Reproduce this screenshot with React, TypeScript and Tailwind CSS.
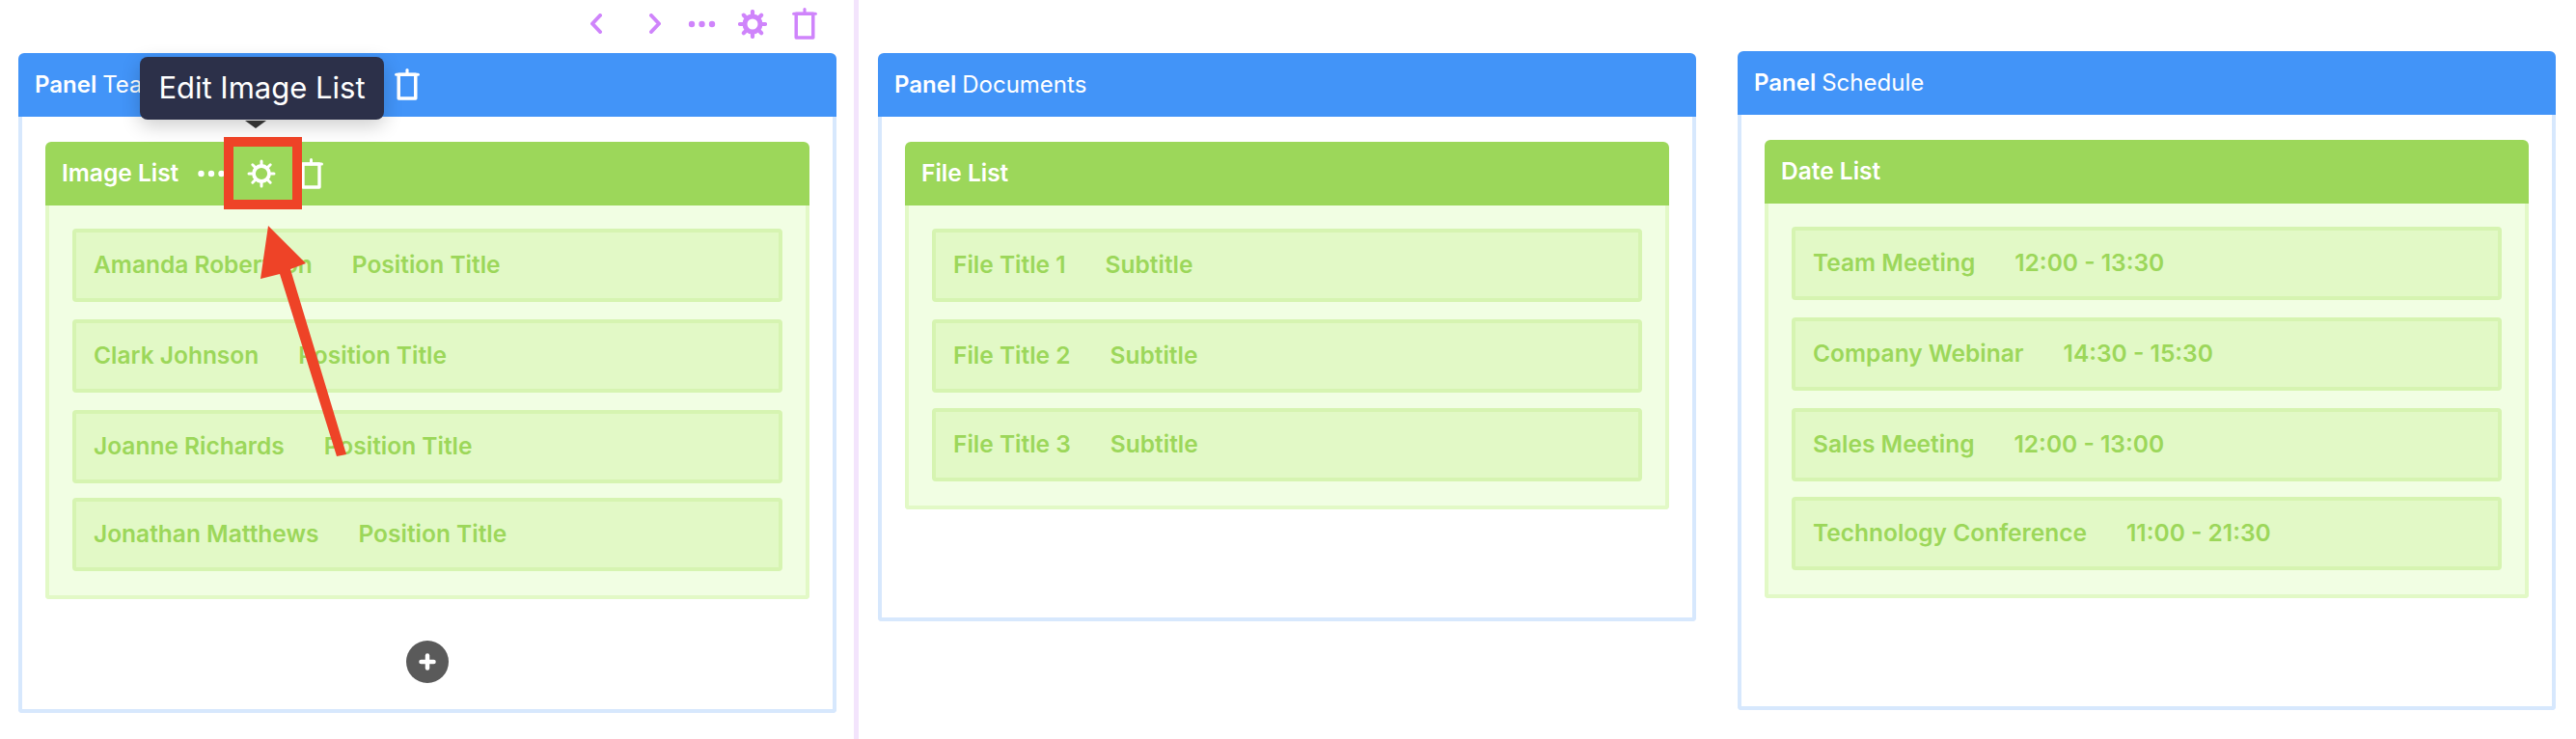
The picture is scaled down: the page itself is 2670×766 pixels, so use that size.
import React from "react";

const Gear = ({ className = "", stroke = 3 }: { className?: string; stroke?: number }) => (
  <svg className={className} viewBox="0 0 30 30" fill="none" stroke="currentColor" strokeLinecap="round">
    <circle cx="15" cy="15" r="8" strokeWidth={stroke + 0.8} />
    {[0, 45, 90, 135, 180, 225, 270, 315].map((a) => (
      <line key={a} x1="15" y1="5.5" x2="15" y2="2" strokeWidth={stroke} transform={`rotate(${a} 15 15)`} />
    ))}
  </svg>
);

const Trash = ({ className = "" }: { className?: string }) => (
  <svg className={className} viewBox="0 0 25 32" fill="none" stroke="currentColor" strokeLinecap="round">
    <line x1="1.5" y1="6" x2="23.5" y2="6" strokeWidth="3" />
    <line x1="12.5" y1="1.5" x2="12.5" y2="6" strokeWidth="3" />
    <rect x="4" y="6" width="17" height="24" strokeWidth="3.4" strokeLinejoin="round" />
  </svg>
);

const Dots = ({ className = "" }: { className?: string }) => (
  <svg className={className} viewBox="0 0 28 8" fill="currentColor">
    <circle cx="3.5" cy="4" r="3.2" />
    <circle cx="14" cy="4" r="3.2" />
    <circle cx="24.5" cy="4" r="3.2" />
  </svg>
);

const Chevron = ({ flip = false }: { flip?: boolean }) => (
  <svg className="w-[12px] h-[21px]" viewBox="0 0 12 21" fill="none" stroke="currentColor" strokeWidth="4" strokeLinecap="round" strokeLinejoin="round">
    <polyline points={flip ? "2,2 10,10.5 2,19" : "10,2 2,10.5 10,19"} />
  </svg>
);

type Row = { left: string; right: string; mt: string };

const teamRows: Row[] = [
  { left: "Amanda Robertson", right: "Position Title", mt: "" },
  { left: "Clark Johnson", right: "Position Title", mt: "mt-[18px]" },
  { left: "Joanne Richards", right: "Position Title", mt: "mt-[18px]" },
  { left: "Jonathan Matthews", right: "Position Title", mt: "mt-[15px]" },
];

const fileRows: Row[] = [
  { left: "File Title 1", right: "Subtitle", mt: "" },
  { left: "File Title 2", right: "Subtitle", mt: "mt-[18px]" },
  { left: "File Title 3", right: "Subtitle", mt: "mt-[16px]" },
];

const dateRows: Row[] = [
  { left: "Team Meeting", right: "12:00 - 13:30", mt: "" },
  { left: "Company Webinar", right: "14:30 - 15:30", mt: "mt-[18px]" },
  { left: "Sales Meeting", right: "12:00 - 13:00", mt: "mt-[18px]" },
  { left: "Technology Conference", right: "11:00 - 21:30", mt: "mt-[16px]" },
];

const ListBlock = ({ title, rows, tools }: { title: string; rows: Row[]; tools?: React.ReactNode }) => (
  <div className="mt-[26px]">
    <div className="h-[66px] pb-[1px] bg-[#9cd75a] rounded-t-[6px] flex items-center pl-[17px] text-white text-[24.5px] font-semibold">
      {title}
      {tools}
    </div>
    <div className="bg-[#f1fee3] border-x-[4px] border-b-[4px] border-[#e2f9c6] rounded-b-[4px] pt-[24px] pb-[25px] px-[24px]">
      {rows.map((row) => (
        <div
          key={row.left}
          className={`h-[76px] pb-[2px] bg-[#e2f9c6] border-[4px] border-[#d6f4b1] rounded-[4px] flex items-center gap-[41px] pl-[18px] text-[24.5px] font-semibold text-[#9cd75a] ${row.mt}`}
        >
          <span>{row.left}</span>
          <span>{row.right}</span>
        </div>
      ))}
    </div>
  </div>
);

const Panel = ({ name, height, tools, children }: { name: string; height: string; tools?: React.ReactNode; children: React.ReactNode }) => (
  <div className={height + " flex flex-col"}>
    <div className="h-[66px] shrink-0 bg-[#4294f8] rounded-t-[6px] flex items-center pl-[17px] text-white text-[24px]">
      <span className="font-semibold mr-[6px]">Panel</span>
      <span>{name}</span>
      {tools}
    </div>
    <div className="flex-1 bg-white border-x-[4px] border-b-[4px] border-[#d7e8fd] rounded-b-[4px] px-[24px]">{children}</div>
  </div>
);

export default function App() {
  return (
    <div className="relative w-[2670px] h-[766px] overflow-hidden bg-white flex font-[family-name:Inter,sans-serif]">
      {/* Column 1 */}
      <div className="w-[890px] shrink-0 border-r-[5px] border-[#f3e4fc] pl-[19px] pr-[18px]">
        <div className="h-[55px] flex items-center text-[#cf84fb] pl-[593px] pb-[6px]">
          <Chevron />
          <div className="ml-[49px]">
            <Chevron flip />
          </div>
          <Dots className="w-[29px] h-[8px] ml-[28px]" />
          <Gear className="w-[30px] h-[30px] ml-[23px]" stroke={4.2} />
          <Trash className="w-[26px] h-[33px] ml-[26px]" />
        </div>
        <Panel
          name="Team"
          height="h-[684px]"
          tools={
            <div className="flex items-center ml-[132px] mb-[2px]">
              <Dots className="w-[28px] h-[8px]" />
              <Gear className="w-[30px] h-[30px] ml-[24px]" />
              <Trash className="w-[26px] h-[33px] ml-[26px]" />
            </div>
          }
        >
          <ListBlock
            title="Image List"
            rows={teamRows}
            tools={
              <div className="flex items-center ml-[20px]">
                <Dots className="w-[28px] h-[8px]" />
                <Gear className="w-[30px] h-[30px] ml-[23px]" />
                <Trash className="w-[25px] h-[32px] ml-[24px]" />
              </div>
            }
          />
          <div className="mt-[43px] flex justify-center">
            <div className="w-[44px] h-[44px] rounded-full bg-[#5a5a5a] flex items-center justify-center">
              <svg className="w-[18px] h-[18px]" viewBox="0 0 18 18" stroke="white" strokeWidth="4.5" strokeLinecap="round">
                <line x1="9" y1="2.5" x2="9" y2="15.5" />
                <line x1="2.5" y1="9" x2="15.5" y2="9" />
              </svg>
            </div>
          </div>
        </Panel>
      </div>

      {/* Column 2 */}
      <div className="w-[868px] shrink-0 pl-[20px] pt-[55px]">
        <Panel name="Documents" height="h-[589px]">
          <ListBlock title="File List" rows={fileRows} />
        </Panel>
      </div>

      {/* Column 3 */}
      <div className="w-[912px] shrink-0 pl-[43px] pr-[21px] pt-[53px]">
        <Panel name="Schedule" height="h-[683px]">
          <ListBlock title="Date List" rows={dateRows} />
        </Panel>
      </div>

      {/* Tooltip */}
      <div className="absolute left-[145px] top-[59px] w-[253px] h-[65px] rounded-[8px] bg-[#2c3049] text-white text-[31px] flex items-center justify-center shadow-[0_6px_20px_rgba(0,0,0,0.2)]">
        Edit Image List
      </div>
      <div className="absolute left-[254px] top-[125px] w-0 h-0 border-x-[11px] border-x-transparent border-t-[8px] border-t-[#333333]" />

      {/* Annotation */}
      <div className="absolute left-[232px] top-[142px] w-[81px] h-[75px] border-[10px] border-[#ee4327]" />
      <svg className="absolute left-0 top-0 w-[2670px] h-[766px] pointer-events-none" viewBox="0 0 2670 766" fill="#ee4327">
        <polygon points="278,234 317,273 301,279 359,471 349,473 290,284 270,289" />
      </svg>
    </div>
  );
}
